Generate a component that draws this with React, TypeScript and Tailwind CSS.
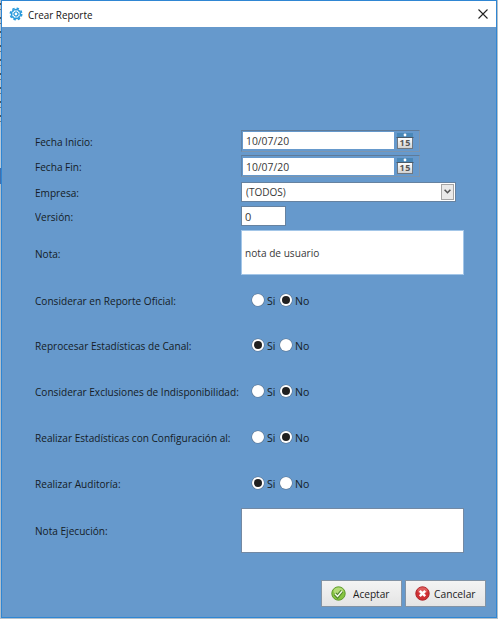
import React, { useState } from "react";

function GearIcon() {
  return (
    <svg width="14" height="14" viewBox="0 0 14 14" fill="none" stroke="#2799dc">
      <circle cx="7" cy="7" r="5.7" strokeWidth="1.6" strokeDasharray="2.4 2.07" />
      <circle cx="7" cy="7" r="4.5" strokeWidth="1.4" />
      <circle cx="7" cy="7" r="2" strokeWidth="1.2" />
      <path d="M7 3v2M7 9v2M3 7h2M9 7h2M4.2 4.2l1.2 1.2M8.6 8.6l1.2 1.2M9.8 4.2L8.6 5.4M5.4 8.6L4.2 9.8" strokeWidth="0.6" />
    </svg>
  );
}

function CalendarIcon() {
  return (
    <svg width="18" height="18" viewBox="0 0 18 18" className="shrink-0">
      <defs>
        <linearGradient id="page" x1="0" y1="0" x2="0" y2="1">
          <stop offset="0.3" stopColor="#ffffff" />
          <stop offset="1" stopColor="#cfcfcf" />
        </linearGradient>
      </defs>
      <rect x="1.5" y="1.5" width="15" height="15" fill="url(#page)" stroke="#6f7780" />
      <rect x="1" y="1" width="16" height="4" fill="#4a88b8" />
      <path d="M0.5 5.5h17" stroke="#4b5a69" />
      <circle cx="9" cy="3" r="1.4" fill="#fff" />
      <text x="9" y="14" textAnchor="middle" fontSize="9" fontWeight="700" fontFamily="Open Sans, sans-serif" fill="#555" textLength="11">15</text>
    </svg>
  );
}

function Row({ label, height, children }: { label: string; height: string; children: React.ReactNode }) {
  return (
    <div className={`flex items-center ${height}`}>
      <div className="w-[206px] shrink-0 origin-left scale-x-[0.917] whitespace-nowrap pt-px text-[#151c26]">{label}</div>
      {children}
    </div>
  );
}

function DateField() {
  return (
    <div className="flex h-[22px] w-[179px] items-center border border-[#7d95ae] border-t-[#5f7b99] border-l-[#5f83aa] pl-px">
      <div className="flex h-[17px] w-[151px] items-center bg-white pl-[3px] text-[#383838]">
        <span className="origin-left scale-x-[0.94]">10/07/20</span>
      </div>
      <div className="ml-[2px] flex">
        <CalendarIcon />
      </div>
    </div>
  );
}

function Radio({ on, label, onClick }: { on: boolean; label: string; onClick: () => void }) {
  return (
    <button type="button" role="radio" aria-checked={on} onClick={onClick} className="flex w-7 items-center gap-[3px] text-[#151c26]">
      <span className="flex size-3 shrink-0 items-center justify-center rounded-full bg-white shadow-[0_0_0_0.6px_#5b7693]">
        {on && <span className="size-2 rounded-full bg-[#202020]" />}
      </span>
      <span className="origin-left scale-x-[0.96] pt-px">{label}</span>
    </button>
  );
}

function Choice({ initial }: { initial: "Si" | "No" }) {
  const [value, setValue] = useState(initial);
  return (
    <div role="radiogroup" className="flex pl-[11px]">
      <Radio on={value === "Si"} label="Si" onClick={() => setValue("Si")} />
      <Radio on={value === "No"} label="No" onClick={() => setValue("No")} />
    </div>
  );
}

function AcceptIcon() {
  return (
    <svg width="15" height="15" viewBox="0 0 15 15">
      <circle cx="7.5" cy="7.5" r="6.7" fill="#86c440" stroke="#5f9a2e" />
      <ellipse cx="7.5" cy="5" rx="5" ry="3.6" fill="#c4e58c" opacity=".7" />
      <path d="M4 7.8l2.5 2.6 4.4-5.2" fill="none" stroke="#4a7c28" strokeWidth="3.4" />
      <path d="M4 7.8l2.5 2.6 4.4-5.2" fill="none" stroke="#f4fbe9" strokeWidth="1.5" />
    </svg>
  );
}

function CancelIcon() {
  return (
    <svg width="15" height="15" viewBox="0 0 15 15">
      <circle cx="7.5" cy="7.5" r="6.7" fill="#cf3034" stroke="#ac2529" />
      <ellipse cx="7.5" cy="4.6" rx="5" ry="3.4" fill="#e87a78" opacity=".6" />
      <path d="M4.8 4.8l5.4 5.4M10.2 4.8l-5.4 5.4" stroke="#fff" strokeWidth="2.5" />
    </svg>
  );
}

export default function App() {
  return (
    <div className="flex h-[619px] w-[498px] overflow-hidden bg-[#b4c0ca] font-['Open_Sans','Noto_Sans',sans-serif] text-[11px] leading-[15px]">
      <div className="flex w-px shrink-0 flex-col">
        <div className="h-[126px] bg-[repeating-linear-gradient(#b9c6d2_0_3px,#4c565f_3px_5px,#b9c6d2_5px_9px,#6d7780_9px_10px,#b9c6d2_10px_14px)]" />
        <div className="h-[42px] bg-[#b9c9d8]" />
        <div className="h-4 bg-[#3f6fae]" />
      </div>
      <div className="flex h-[618px] w-[496px] shrink-0 flex-col border border-[#2f86d3] bg-[#6699cc]">
        <header className="flex h-[26px] shrink-0 items-center bg-white pl-[7px] pr-[8px]">
          <GearIcon />
          <span className="ml-[5px] flex-1 origin-left scale-x-[0.895] text-[#151515]">Crear Reporte</span>
          <svg width="10" height="10" viewBox="0 0 10 10" stroke="#222" strokeWidth="1.1">
            <path d="M.5 .5l9 9M9.5 .5l-9 9" />
          </svg>
        </header>
        <main className="pl-[33px] pt-[101px]">
          <Row label="Fecha Inicio:" height="h-[25px]"><DateField /></Row>
          <Row label="Fecha Fin:" height="h-[26px]"><DateField /></Row>
          <Row label="Empresa:" height="h-[25px]">
            <div className="flex h-5 w-[215px] items-center border border-[#6682a0] bg-white pl-1 text-[#383838]">
              <span className="origin-left scale-x-[0.91]">(TODOS)</span>
              <span className="ml-auto mr-px flex h-4 w-[13px] items-center justify-center border border-[#a5a5a5] bg-[#e9e9e9]">
                <svg width="7" height="5" viewBox="0 0 7 5" fill="none" stroke="#555" strokeWidth="1.6"><path d="M.6 .7l2.9 3 2.9-3" /></svg>
              </span>
            </div>
          </Row>
          <Row label="Versión:" height="h-6">
            <div className="flex h-5 w-[45px] items-center border border-[#6682a0] bg-white pl-[3px] text-[#383838]">0</div>
          </Row>
          <Row label="Nota:" height="h-[49px]">
            <div className="flex h-[45px] w-[223px] items-center border border-[#a3c6e8] bg-white pl-[3px] text-[#383838]">
              <span className="origin-left scale-x-[0.92]">nota de usuario</span>
            </div>
          </Row>
          <Row label="Considerar en Reporte Oficial:" height="h-[45px]"><Choice initial="No" /></Row>
          <Row label="Reprocesar Estadísticas de Canal:" height="h-[46px]"><Choice initial="Si" /></Row>
          <Row label="Considerar Exclusiones de Indisponibilidad:" height="h-[46px]"><Choice initial="No" /></Row>
          <Row label="Realizar Estadísticas con Configuración al:" height="h-[45px]"><Choice initial="No" /></Row>
          <Row label="Realizar Auditoría:" height="h-[47px]"><Choice initial="Si" /></Row>
          <Row label="Nota Ejecución:" height="h-[48px]">
            <div className="h-[45px] w-[223px] border border-[#7389a3] bg-white" />
          </Row>
        </main>
        <footer className="mt-auto flex justify-end gap-[3px] pb-[10px] pr-[10px]">
          <button type="button" className="flex h-[27px] w-[81px] items-center border border-[#8293a5] bg-gradient-to-b from-[#f4f4f4] to-[#e4e4e4] pl-[9px] text-[#1b1b1b]">
            <AcceptIcon />
            <span className="ml-[7px] origin-left scale-x-[0.92]">Aceptar</span>
          </button>
          <button type="button" className="flex h-[27px] w-[81px] items-center border border-[#8293a5] bg-gradient-to-b from-[#f4f4f4] to-[#e4e4e4] pl-[9px] text-[#1b1b1b]">
            <CancelIcon />
            <span className="ml-[4px] origin-left scale-x-[0.93]">Cancelar</span>
          </button>
        </footer>
      </div>
    </div>
  );
}
